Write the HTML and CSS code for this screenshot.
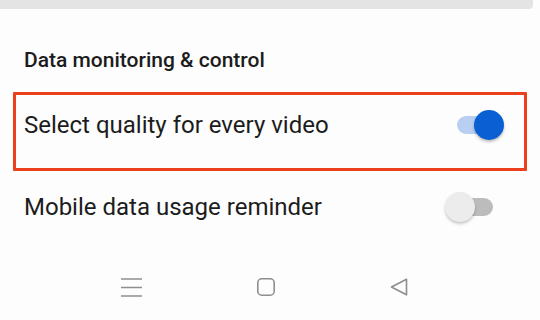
FILE: index.html
```html
<!DOCTYPE html>
<html lang="en">
<head>
<meta charset="utf-8">
<title>Data monitoring</title>
<link rel="stylesheet" href="styles.css">
</head>
<body>
<div class="screen">
  <div class="topband"></div>
  <div class="title">Data monitoring &amp; control</div>
  <div class="row highlight">
    <span class="label">Select quality for every video</span>
    <span class="switch on"><span class="track"></span><span class="knob"></span></span>
  </div>
  <div class="row plain">
    <span class="label">Mobile data usage reminder</span>
    <span class="switch off"><span class="track"></span><span class="knob"></span></span>
  </div>
  <div class="nav">
    <svg class="ico menu" width="21" height="18" viewBox="0 0 21 18">
      <path d="M0 1h21M0 9.5h21M0 18h21" stroke="#8e8e8e" stroke-width="1.6" fill="none"/>
    </svg>
    <svg class="ico" width="18" height="18" viewBox="0 0 18 18">
      <rect x="0.8" y="0.8" width="16.4" height="16.4" rx="4" ry="4" stroke="#8e8e8e" stroke-width="1.6" fill="none"/>
    </svg>
    <svg class="ico" width="18" height="18" viewBox="0 0 18 18">
      <path d="M16.5 1.2 L1.5 9 L16.5 16.8 Z" stroke="#8e8e8e" stroke-width="1.6" stroke-linejoin="round" fill="none"/>
    </svg>
  </div>
</div>
</body>
</html>
```

FILE: styles.css
```css
* { box-sizing: border-box; }
html, body { margin: 0; padding: 0; }
body {
  width: 540px;
  height: 320px;
  overflow: hidden;
  background: #fdfdfd;
  font-family: Roboto, "Noto Sans", sans-serif;
  color: #1c1c1c;
}
.screen { width: 540px; height: 320px; }
.topband {
  width: 533px;
  height: 9px;
  background: #e4e4e4;
  border-bottom-right-radius: 4px;
}
.title {
  margin-top: 39px;
  padding-left: 24px;
  font-size: 21px;
  line-height: 24px;
  font-weight: 500;
}
.row {
  margin: 0 13px;
  border: 3px solid transparent;
  display: flex;
  align-items: center;
  justify-content: space-between;
}
.row.highlight {
  margin-top: 20px;
  border-color: #ec3f1c;
  border-radius: 1px;
  padding: 15px 27px 28px 8px;
}
.row.plain {
  padding: 18px 31px 0 8px;
}
.label {
  font-size: 24px;
  line-height: 30px;
}
.switch {
  position: relative;
  width: 40px;
  height: 30px;
  flex: none;
}
.track {
  position: absolute;
  left: 0;
  top: 6px;
  width: 40px;
  height: 18px;
  border-radius: 9px;
}
.knob {
  position: absolute;
  top: 0;
  width: 30px;
  height: 30px;
  border-radius: 50%;
}
.switch.on .track { background: #b8cff2; }
.switch.on .knob {
  left: 17px;
  background: #0a5fd2;
  box-shadow: 0 2px 3px rgba(0, 0, 0, 0.25);
}
.switch.off .track { background: #bcbcbc; }
.switch.off .knob {
  left: -8px;
  background: #ececec;
  box-shadow: 0 2px 3px rgba(0, 0, 0, 0.22);
}
.nav {
  margin-top: 53px;
  padding-left: 121px;
  display: flex;
  align-items: center;
  gap: 115px;
}
.ico { display: block; overflow: visible; }
```
